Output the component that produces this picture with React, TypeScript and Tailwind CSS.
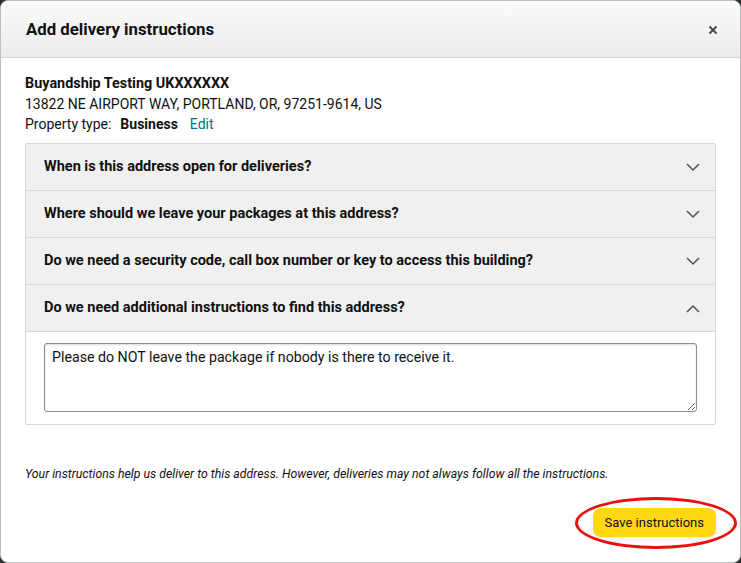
import { useState } from "react";

const QUESTIONS = [
  "When is this address open for deliveries?",
  "Where should we leave your packages at this address?",
  "Do we need a security code, call box number or key to access this building?",
  "Do we need additional instructions to find this address?",
];

function Chevron({ up }: { up?: boolean }) {
  return (
    <svg width="14" height="9" viewBox="0 0 14 9" fill="none" className="text-[#565959]">
      <polyline
        points={up ? "1,8 7,2 13,8" : "1,1 7,7 13,1"}
        stroke="currentColor"
        strokeWidth="1.6"
        strokeLinejoin="round"
      />
    </svg>
  );
}

export default function App() {
  const [open, setOpen] = useState(3);
  const [note, setNote] = useState(
    "Please do NOT leave the package if nobody is there to receive it.",
  );

  return (
    <div className="relative w-[741px] h-[563px] bg-[#2b2f2f] font-['Roboto',Arial,sans-serif] text-[#0f1111]">
      <div className="w-full h-full flex flex-col rounded-[8px] border border-[#b9c0c0] bg-white overflow-hidden">
        <div className="h-[57px] shrink-0 flex items-center justify-between pl-[25px] pr-[22px] pt-[1px] bg-linear-to-b from-[#fbfbfb] to-[#ececec] border-b border-[#d5d9d9]">
          <h1 className="text-[16.8px] font-bold">Add delivery instructions</h1>
          <svg width="10" height="10" viewBox="0 0 10 10" className="text-[#444]">
            <path d="M1.5 1.5 L8.5 8.5 M8.5 1.5 L1.5 8.5" stroke="currentColor" strokeWidth="1.8" />
          </svg>
        </div>

        <div className="flex-1 flex flex-col px-[24px] pt-[16px]">
          <div className="text-[14px] leading-[20px]">
            <div className="h-[20px] font-bold text-[14.4px]">Buyandship Testing UKXXXXXX</div>
            <div className="h-[20px]">13822 NE AIRPORT WAY, PORTLAND, OR, 97251-9614, US</div>
            <div className="h-[20px]">
              Property type:<span className="font-bold ml-[9px]">Business</span>
              <span className="text-[#007185] ml-[12px]">Edit</span>
            </div>
          </div>

          <div className="mt-[9px] border border-[#d5d9d9] rounded-[2px]">
            {QUESTIONS.map((q, i) => (
              <div key={q} className={i > 0 ? "border-t border-[#d5d9d9]" : ""}>
                <button
                  onClick={() => setOpen(open === i ? -1 : i)}
                  className="w-full h-[46px] flex items-center justify-between pl-[18px] pr-[15px] bg-[#f0f0f0] text-left"
                >
                  <span className="text-[14.5px] font-bold">{q}</span>
                  <Chevron up={open === i} />
                </button>
                {open === i && (
                  <div className="border-t border-[#d5d9d9] px-[18px] pt-[11px] pb-[12px]">
                    <textarea
                      value={note}
                      onChange={(e) => setNote(e.target.value)}
                      className="block w-full h-[69px] border border-[#888c8c] rounded-[3px] px-[7px] py-[3px] text-[14.2px] leading-[20px] shadow-[inset_0_1px_2px_rgba(15,17,17,0.15)] outline-none resize-y"
                    />
                  </div>
                )}
              </div>
            ))}
          </div>

          <p className="mt-[41px] text-[12.3px] leading-[16px] italic text-[#0f1111]">
            Your instructions help us deliver to this address. However, deliveries may not always follow all the instructions.
          </p>

          <div className="mt-[26px] flex justify-end">
            <button className="h-[29px] px-[12px] rounded-[8px] bg-[#ffd814] text-[13px] shadow-[0_2px_5px_rgba(213,217,217,0.5)]">
              Save instructions
            </button>
          </div>
        </div>
      </div>

      <div className="absolute left-[575px] top-[497px] w-[162px] h-[52px] rounded-[50%] border-[3px] border-[#e8120c]" />
    </div>
  );
}
